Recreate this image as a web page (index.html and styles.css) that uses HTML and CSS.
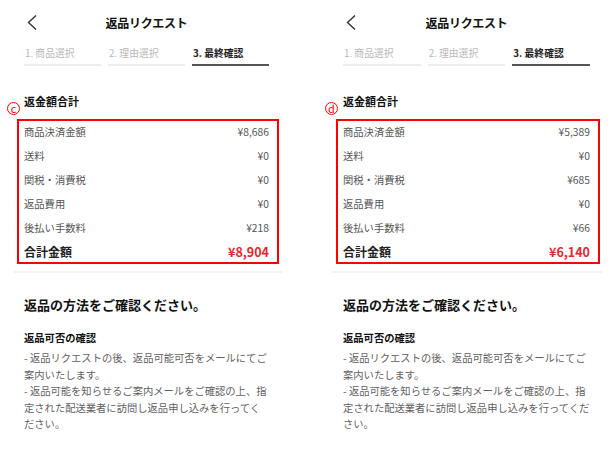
FILE: index.html
```html
<!DOCTYPE html>
<html lang="ja">
<head>
    <meta charset="UTF-8">
    <title>返品リクエスト</title>
    <link rel="stylesheet" href="styles.css">
</head>
<body>

<div class="page">

    <!-- c -->
    <div class="screen screen_c">
        <div class="hd">
            <span class="back">
                <svg width="10" height="15" viewBox="0 0 10 15"><polyline points="9,0.5 1.5,7.5 9,14.5" fill="none" stroke="#333" stroke-width="1.4"/></svg>
            </span>
            <p class="hd_title">返品リクエスト</p>
            <span></span>
        </div>

        <div class="steps">
            <div class="step">1. 商品選択</div>
            <div class="step">2. 理由選択</div>
            <div class="step step_on">3. 最終確認</div>
        </div>

        <div class="sum">
            <span class="mark">c</span>
            <p class="sum_title">返金額合計</p>
            <div class="sum_box">
                <div class="row"><span>商品決済金額</span><span>¥8,686</span></div>
                <div class="row"><span>送料</span><span>¥0</span></div>
                <div class="row"><span>関税・消費税</span><span>¥0</span></div>
                <div class="row"><span>返品費用</span><span>¥0</span></div>
                <div class="row"><span>後払い手数料</span><span>¥218</span></div>
                <div class="row row_total"><span>合計金額</span><span class="price">¥8,904</span></div>
            </div>
        </div>

        <div class="guide">
            <h2>返品の方法をご確認ください。</h2>
            <h3>返品可否の確認</h3>
            <p>- 返品リクエストの後、返品可能可否をメールにてご案内いたします。</p>
            <p>- 返品可能を知らせるご案内メールをご確認の上、指定された配送業者に訪問し返品申し込みを行ってください。</p>
        </div>
    </div>

    <!-- d -->
    <div class="screen screen_d">
        <div class="hd">
            <span class="back">
                <svg width="10" height="15" viewBox="0 0 10 15"><polyline points="9,0.5 1.5,7.5 9,14.5" fill="none" stroke="#333" stroke-width="1.4"/></svg>
            </span>
            <p class="hd_title">返品リクエスト</p>
            <span></span>
        </div>

        <div class="steps">
            <div class="step">1. 商品選択</div>
            <div class="step">2. 理由選択</div>
            <div class="step step_on">3. 最終確認</div>
        </div>

        <div class="sum">
            <span class="mark">d</span>
            <p class="sum_title">返金額合計</p>
            <div class="sum_box">
                <div class="row"><span>商品決済金額</span><span>¥5,389</span></div>
                <div class="row"><span>送料</span><span>¥0</span></div>
                <div class="row"><span>関税・消費税</span><span>¥685</span></div>
                <div class="row"><span>返品費用</span><span>¥0</span></div>
                <div class="row"><span>後払い手数料</span><span>¥66</span></div>
                <div class="row row_total"><span>合計金額</span><span class="price">¥6,140</span></div>
            </div>
        </div>

        <div class="guide">
            <h2>返品の方法をご確認ください。</h2>
            <h3>返品可否の確認</h3>
            <p>- 返品リクエストの後、返品可能可否をメールにてご案内いたします。</p>
            <p>- 返品可能を知らせるご案内メールをご確認の上、指定された配送業者に訪問し返品申し込みを行ってください。</p>
        </div>
    </div>

</div>
</body>
</html>
```

FILE: styles.css
```css
*{
    margin: 0px;
    padding: 0px;
    box-sizing: border-box;
}
body{
    background-color: white;
    font-family: "Noto Sans CJK JP", "Noto Sans", sans-serif;
    color: #222;
}

.page{
    display: flex;
    align-items: flex-start;
}

.screen{
    width: 268px;
    margin-left: 14px;
}
.screen > *{
    padding-left: 10px;
    padding-right: 13px;
}
.screen_d{
    width: 270px;
    margin-left: 50px;
}
.screen_d > *{
    padding-left: 11px;
    padding-right: 12px;
}

/* header */
.hd{
    height: 44px;
    display: grid;
    grid-template-columns: 1fr auto 1fr;
    align-items: center;
}
.back{
    display: flex;
    padding-left: 3px;
}
.hd_title{
    font-size: 12px;
    font-weight: bold;
    letter-spacing: -0.3px;
    color: #111;
}

/* steps */
.steps{
    display: flex;
    gap: 7px;
}
.step{
    flex: 1;
    font-size: 9.8px;
    line-height: 18px;
    padding-bottom: 2px;
    padding-left: 1px;
    color: #b8b8b8;
    border-bottom: 2px solid #ededed;
}
.step_on{
    color: #222;
    font-weight: bold;
    border-bottom-color: #555;
}

/* refund total */
.sum{
    position: relative;
    margin-top: 26px;
    padding-bottom: 7px;
    border-bottom: 2px solid #f3f3f3;
}
.mark{
    position: absolute;
    left: -7px;
    top: 10px;
    width: 13px;
    height: 13px;
    border: 1px solid #f00;
    border-radius: 50%;
    color: #f00;
    font-size: 11px;
    line-height: 10px;
    text-align: center;
}
.sum_title{
    font-size: 11px;
    font-weight: bold;
    line-height: 18px;
    color: #111;
}
.sum_box{
    margin: 9px -10px 0px -7px;
    padding: 0px 8px 0px 5px;
    border: 2px solid #f00;
    display: grid;
    row-gap: 3px;
}
.row{
    height: 21px;
    display: flex;
    justify-content: space-between;
    align-items: center;
    font-size: 10.3px;
    color: #555;
}
.row_total{
    font-size: 12px;
    font-weight: bold;
    color: #222;
}
.price{
    color: #e8252c;
    font-size: 12.5px;
}

/* guide */
.guide{
    padding-top: 22px;
}
.guide h2{
    font-size: 13px;
    line-height: 20px;
    color: #111;
}
.guide h3{
    margin-top: 15px;
    margin-bottom: 4px;
    font-size: 10.3px;
    line-height: 16px;
    color: #111;
}
.guide p{
    font-size: 10.3px;
    line-height: 16.5px;
    color: #5f5f5f;
}
```
